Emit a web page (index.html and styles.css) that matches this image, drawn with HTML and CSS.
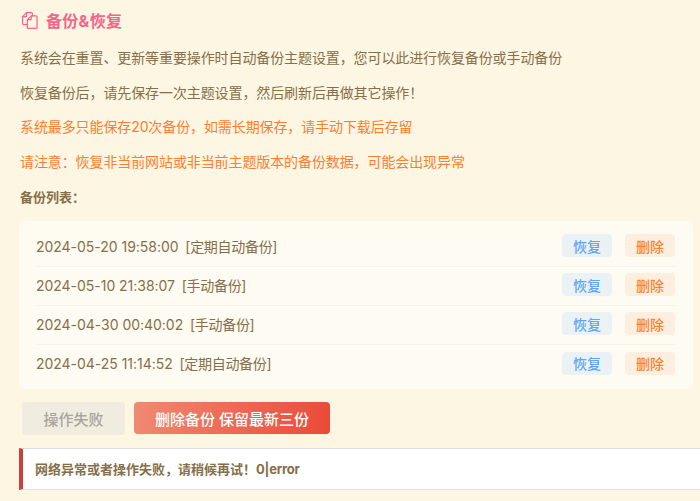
FILE: index.html
```html
<!DOCTYPE html>
<html lang="en">
<head>
  <meta charset="UTF-8" />
  <meta name="viewport" content="width=device-width, initial-scale=1.0" />
  <title>备份&amp;恢复</title>
  <link rel="stylesheet" href="styles.css">
</head>
<body>
  <div class="panel">
    <h3 class="title">
      <svg class="title-icon" viewBox="0 0 16 17" width="16" height="17" fill="none" stroke="currentColor" stroke-width="1.2" stroke-linejoin="round" stroke-linecap="round">
        <path d="M5 12.6H1.6a1 1 0 0 1-1-1V4.6L4.6.6h4.8a1 1 0 0 1 1 1v2.2"/>
        <path d="M4.6.8v3.8H.8"/>
        <path d="M9.2 3.9h4.9a1 1 0 0 1 1 1v10.5a1 1 0 0 1-1 1H6.4a1 1 0 0 1-1-1V7.6z"/>
        <path d="M9.2 4.1v3.5H5.6"/>
      </svg>
      <span class="title-text">备份&amp;恢复</span>
    </h3>
    <p class="line">系统会在重置、更新等重要操作时自动备份主题设置，您可以此进行恢复备份或手动备份</p>
    <p class="line">恢复备份后，请先保存一次主题设置，然后刷新后再做其它操作！</p>
    <p class="line warn">系统最多只能保存20次备份，如需长期保存，请手动下载后存留</p>
    <p class="line warn">请注意：恢复非当前网站或非当前主题版本的备份数据，可能会出现异常</p>
    <p class="line label">备份列表：</p>

    <div class="backup-list">
      <div class="backup-row">
        <span class="backup-name">2024-05-20 19:58:00&nbsp; <span class="backup-kind">[定期自动备份]</span></span>
        <button class="tag tag-blue">恢复</button>
        <button class="tag tag-orange">删除</button>
      </div>
      <div class="backup-row">
        <span class="backup-name">2024-05-10 21:38:07&nbsp; <span class="backup-kind">[手动备份]</span></span>
        <button class="tag tag-blue">恢复</button>
        <button class="tag tag-orange">删除</button>
      </div>
      <div class="backup-row">
        <span class="backup-name">2024-04-30 00:40:02&nbsp; <span class="backup-kind">[手动备份]</span></span>
        <button class="tag tag-blue">恢复</button>
        <button class="tag tag-orange">删除</button>
      </div>
      <div class="backup-row">
        <span class="backup-name">2024-04-25 11:14:52&nbsp; <span class="backup-kind">[定期自动备份]</span></span>
        <button class="tag tag-blue">恢复</button>
        <button class="tag tag-orange">删除</button>
      </div>
    </div>

    <div class="actions">
      <button class="btn btn-fail">操作失败</button>
      <button class="btn btn-danger">删除备份 保留最新三份</button>
    </div>

    <div class="notice">网络异常或者操作失败，请稍候再试！<span class="notice-code">0|error</span></div>
  </div>
</body>
</html>
```

FILE: styles.css
```css
*{box-sizing:border-box;font-family:"Inter","Noto Sans CJK SC",sans-serif}
html,body{height:100%}
body{margin:0;background:#fdf6e3;overflow:hidden}
.panel{padding:8px 0 0 19px;color:#866f49;font-size:14px}
.title{display:flex;align-items:center;gap:8px;margin:0 0 0 3px;height:25px;padding-bottom:1px;font-size:16px;font-weight:700;color:#f2668b}
.title-icon{display:block}
.title-text{letter-spacing:.3px}
.line{margin:0 0 0 1px;padding-top:14.75px;height:34.75px;line-height:20px;font-size:14px;letter-spacing:-.1px}
.warn{color:#fd7e2e}
.label{font-weight:700;font-size:13px;letter-spacing:0}
.backup-list{margin:14px 7px 0 0;padding:7px 17px 5px;background:#fefbf2;border-radius:6px}
.backup-row{display:flex;align-items:center;height:39px;padding-bottom:2px;border-bottom:1px solid #f8f3e6}
.backup-row:last-child{border-bottom:none}
.backup-name{flex:1;font-size:14px;color:#866f49;letter-spacing:-.03px}
.backup-kind{letter-spacing:-.3px;margin-left:-1px}
button{border:none;cursor:pointer;font-size:14px;font-weight:500}
.tag{width:50px;height:23px;padding:0;border-radius:4px;margin-right:1px}
.tag-blue{background:#ebf2f6;color:#5ea5f5;margin-right:13px}
.tag-orange{background:#fcefe0;color:#f98334}
.actions{display:flex;align-items:center;gap:9px;margin:13px 0 0 3px}
.btn{height:33px;border-radius:4px;font-size:15px}
.btn-fail{width:103px;background:#f0ede0;color:#a9a69d}
.btn-danger{width:196px;height:32px;background:linear-gradient(100deg,#f08a72,#ea4a38);color:#fff}
.notice{margin-top:13px;height:42px;line-height:40px;padding-left:12px;background:#fff;border-left:4px solid #cb3f3f;border-top:1px solid #dcdcdc;border-bottom:1px solid #e2e2e2;font-size:13px;font-weight:700;color:#866f49}
.notice-code{letter-spacing:-.2px}
```
